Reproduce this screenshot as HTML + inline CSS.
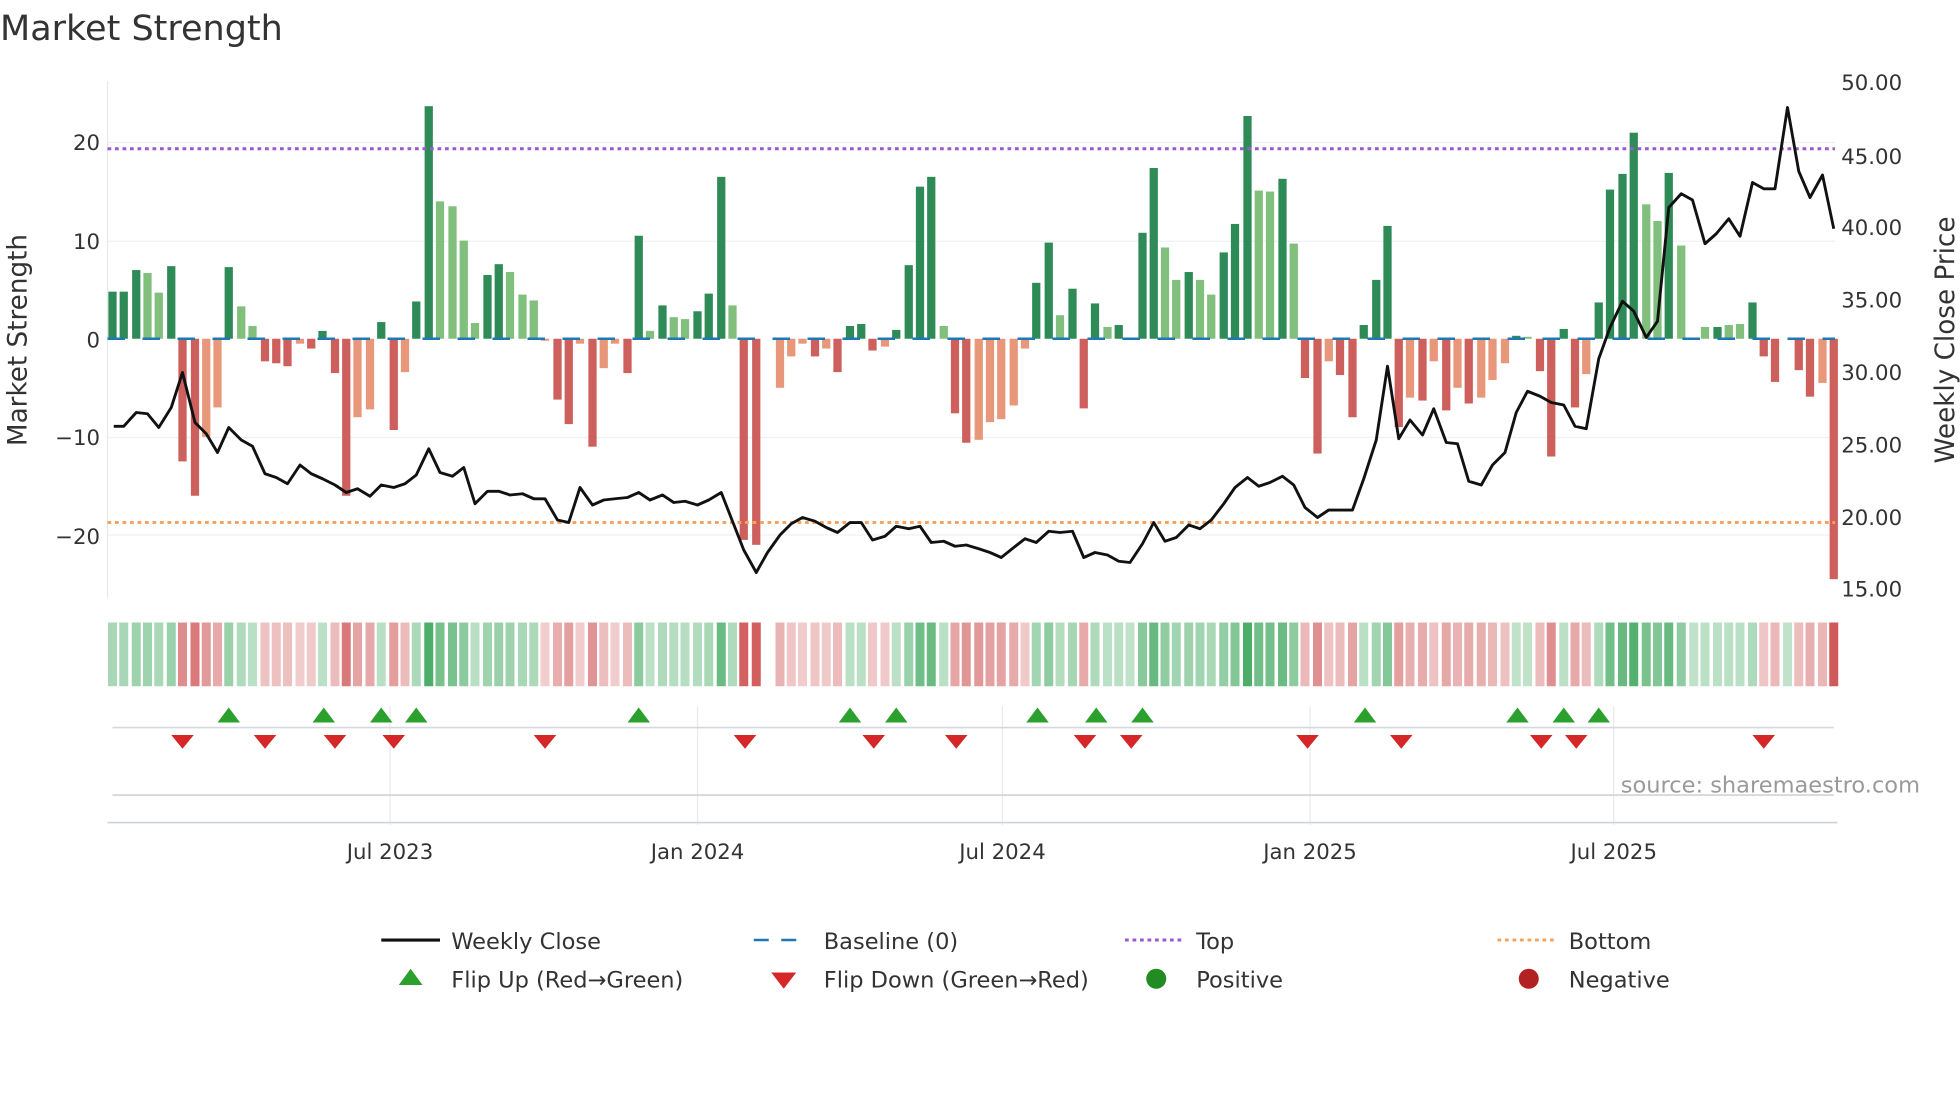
<!DOCTYPE html>
<html><head><meta charset="utf-8"><style>
html,body{margin:0;padding:0;background:#fff;width:1960px;height:1102px;overflow:hidden}
svg{display:block}
text{font-family:"DejaVu Sans","Liberation Sans",sans-serif;fill:#333}
</style></head><body>
<svg id="s" width="1960" height="1102" viewBox="0 0 1568 881.6" xmlns="http://www.w3.org/2000/svg">
<rect width="1568" height="882" fill="#fff"/>
<text x="0" y="32" font-size="28">Market Strength</text>
<g stroke="#eef0f5" stroke-width="1">
<line x1="86" x2="1468" y1="114" y2="114"/><line x1="86" x2="1468" y1="193" y2="193"/>
<line x1="86" x2="1468" y1="350" y2="350"/><line x1="86" x2="1468" y1="428" y2="428"/>
</g>
<line x1="86" x2="86" y1="65" y2="478" stroke="#e6e8ee"/>
<g font-size="17" text-anchor="end">
<text x="80" y="120">20</text><text x="80" y="199">10</text><text x="80" y="278">0</text>
<text x="80" y="356">−10</text><text x="80" y="435">−20</text>
</g>
<g font-size="17">
<text x="1473" y="72">50.00</text><text x="1473" y="131">45.00</text><text x="1473" y="188">40.00</text>
<text x="1473" y="246">35.00</text><text x="1473" y="304">30.00</text><text x="1473" y="362">25.00</text>
<text x="1473" y="420">20.00</text><text x="1473" y="477">15.00</text>
</g>
<text transform="translate(21,272) rotate(-90)" font-size="21" text-anchor="middle">Market Strength</text>
<text transform="translate(1563,272) rotate(-90)" font-size="21" text-anchor="middle">Weekly Close Price</text>
<g id="bars"></g>
<line x1="86" x2="1468" y1="271" y2="271" stroke="#1f77b4" stroke-width="2" stroke-dasharray="14 14"/>
<line x1="86" x2="1468" y1="119" y2="119" stroke="#9b59d0" stroke-width="2.4" stroke-dasharray="3 3"/>
<line x1="86" x2="1468" y1="418" y2="418" stroke="#f4a460" stroke-width="2.4" stroke-dasharray="3 3"/>
<polyline id="price" fill="none" stroke="#111" stroke-width="2.3" stroke-linejoin="round"/>
<g id="strip"></g>
<g stroke="#e8eaee" stroke-width="1">
<line x1="312" x2="312" y1="565" y2="660"/><line x1="558" x2="558" y1="565" y2="660"/>
<line x1="802" x2="802" y1="565" y2="660"/><line x1="1048" x2="1048" y1="565" y2="660"/>
<line x1="1291" x2="1291" y1="565" y2="660"/>
</g>
<line x1="90" x2="1467" y1="582" y2="582" stroke="#d5d8de" stroke-width="1.3"/>
<line x1="90" x2="1467" y1="636" y2="636" stroke="#d0d3d8" stroke-width="1.3"/>
<line x1="86" x2="1470" y1="658" y2="658" stroke="#cfd2d8" stroke-width="1.3"/>
<g id="mk"></g>
<text x="1536" y="634" font-size="18" style="fill:#9a9a9a" text-anchor="end">source: sharemaestro.com</text>
<g font-size="17" text-anchor="middle">
<text x="312" y="687">Jul 2023</text><text x="558" y="687">Jan 2024</text><text x="802" y="687">Jul 2024</text>
<text x="1048" y="687">Jan 2025</text><text x="1291" y="687">Jul 2025</text>
</g>
<g font-size="18">
<line x1="305" x2="352" y1="752" y2="752" stroke="#111" stroke-width="2.5"/><text x="361" y="759">Weekly Close</text>
<line x1="603" x2="647" y1="752" y2="752" stroke="#1f77b4" stroke-width="2" stroke-dasharray="12 10"/><text x="659" y="759">Baseline (0)</text>
<line x1="900" x2="946" y1="752" y2="752" stroke="#9b59d0" stroke-width="2.4" stroke-dasharray="3 3"/><text x="957" y="759">Top</text>
<line x1="1198" x2="1244" y1="752" y2="752" stroke="#f4a460" stroke-width="2.4" stroke-dasharray="3 3"/><text x="1255" y="759">Bottom</text>
<polygon points="319,788 338,788 328.5,775" fill="#2ca02c"/><text x="361" y="790">Flip Up (Red→Green)</text>
<polygon points="617,778 637,778 627,791" fill="#d62728"/><text x="659" y="790">Flip Down (Green→Red)</text>
<circle cx="925" cy="783" r="8" fill="#228b22"/><text x="957" y="790">Positive</text>
<circle cx="1223" cy="783" r="8" fill="#b22222"/><text x="1255" y="790">Negative</text>
</g>
</svg>
<script>
var B=[[90,4.8,'d'],[99,4.8,'d'],[109,7,'d'],[118,6.7,'l'],[127,4.7,'l'],[137,7.4,'d'],[146,-12.5,'r'],[156,-16,'r'],[165,-10,'s'],[174,-7,'s'],[183,7.3,'d'],[193,3.3,'l'],[202,1.3,'l'],[212,-2.3,'r'],[221,-2.5,'r'],[230,-2.8,'r'],[240,-0.5,'s'],[249,-1,'r'],[258,0.8,'d'],[268,-3.5,'r'],[277,-16,'r'],[286,-8,'s'],[296,-7.2,'s'],[305,1.7,'d'],[315,-9.3,'r'],[324,-3.4,'s'],[333,3.8,'d'],[343,23.7,'d'],[352,14,'l'],[362,13.5,'l'],[371,10,'l'],[380,1.6,'l'],[390,6.5,'d'],[399,7.6,'d'],[408,6.8,'l'],[418,4.5,'l'],[427,3.9,'l'],[436,-0.2,'s'],[446,-6.2,'r'],[455,-8.7,'r'],[464,-0.5,'s'],[474,-11,'r'],[483,-3,'s'],[492,-0.5,'s'],[502,-3.5,'r'],[511,10.5,'d'],[520,0.8,'l'],[530,3.4,'d'],[539,2.2,'l'],[548,2,'l'],[558,2.8,'d'],[567,4.6,'d'],[577,16.5,'d'],[586,3.4,'l'],[595,-20.5,'r'],[605,-21,'r'],[614,0,'s'],[624,-5,'s'],[633,-1.8,'s'],[642,-0.5,'s'],[652,-1.8,'r'],[661,-1,'s'],[670,-3.4,'r'],[680,1.3,'d'],[689,1.5,'d'],[698,-1.2,'r'],[708,-0.8,'s'],[717,0.9,'d'],[727,7.5,'d'],[736,15.5,'d'],[745,16.5,'d'],[755,1.3,'l'],[764,-7.6,'r'],[773,-10.6,'r'],[783,-10.3,'s'],[792,-8.5,'s'],[801,-8.2,'s'],[811,-6.8,'s'],[820,-1,'s'],[829,5.7,'d'],[839,9.8,'d'],[848,2.4,'l'],[858,5.1,'d'],[867,-7.1,'r'],[876,3.6,'d'],[886,1.2,'l'],[895,1.4,'d'],[904,0,'s'],[914,10.8,'d'],[923,17.4,'d'],[932,9.3,'l'],[941,6,'l'],[951,6.8,'d'],[960,6,'l'],[969,4.5,'l'],[979,8.8,'d'],[988,11.7,'d'],[998,22.7,'d'],[1007,15.1,'l'],[1016,15,'l'],[1026,16.3,'d'],[1035,9.7,'l'],[1044,-4,'r'],[1054,-11.7,'r'],[1063,-2.3,'s'],[1072,-3.7,'r'],[1082,-8,'r'],[1091,1.4,'d'],[1101,6,'d'],[1110,11.5,'d'],[1119,-9,'r'],[1128,-6,'s'],[1138,-6.3,'r'],[1147,-2.3,'s'],[1157,-7.3,'r'],[1166,-5,'s'],[1175,-6.6,'r'],[1185,-6,'s'],[1194,-4.2,'s'],[1204,-2.5,'s'],[1213,0.3,'d'],[1222,0.2,'l'],[1232,-3.3,'r'],[1241,-12,'r'],[1251,1,'d'],[1260,-7,'r'],[1269,-3.6,'s'],[1279,3.7,'d'],[1288,15.2,'d'],[1298,16.8,'d'],[1307,21,'d'],[1317,13.7,'l'],[1326,12,'l'],[1335,16.9,'d'],[1345,9.5,'l'],[1355,0,'s'],[1364,1.2,'l'],[1374,1.2,'d'],[1383,1.4,'l'],[1392,1.5,'l'],[1402,3.7,'d'],[1411,-1.8,'r'],[1420,-4.4,'r'],[1430,0,'s'],[1439,-3.2,'r'],[1448,-5.9,'r'],[1458,-4.5,'s'],[1467,-24.5,'r']];
var C={d:'#2e8b57',l:'#80bf7c',r:'#cd5f5c',s:'#e8977a'};
var NS='http://www.w3.org/2000/svg',g=document.getElementById('bars'),st=document.getElementById('strip');
function R(p,x,y,w,h,f){var r=document.createElementNS(NS,'rect');r.setAttribute('x',x);r.setAttribute('y',y);r.setAttribute('width',w);r.setAttribute('height',h);r.setAttribute('fill',f);p.appendChild(r);}
B.forEach(function(b){var h=Math.abs(b[1])*7.85;var y=b[1]>0?271-h:271;if(h>0.3)R(g,b[0]-3.3,y,6.6,h,C[b[2]]);
var v=b[1],a,f;if(v>=0){a=0.3+0.55*Math.min(v/22,1);f='rgba(46,160,80,'+a+')';}else{a=0.25+0.6*Math.min(-v/22,1);f='rgba(200,60,60,'+a+')';}
if(b[0]==614)f='#fff';R(st,b[0]-3.6,498,7.2,51,f);});
var P=[[91,341],[99,341],[109,330],[118,331],[127,342],[137,326],[146,298],[156,338],[165,347],[174,362],[183,342],[193,352],[202,357],[212,379],[221,382],[230,387],[240,372],[249,379],[258,383],[268,388],[277,394],[286,391],[296,397],[305,388],[315,390],[324,387],[333,380],[343,359],[352,378],[362,381],[371,374],[380,403],[390,393],[399,393],[408,396],[418,395],[427,399],[436,399],[446,416],[455,418],[464,390],[474,404],[483,400],[492,399],[502,398],[511,394],[520,400],[530,396],[539,402],[548,401],[558,404],[567,400],[577,394],[586,417],[595,440],[605,458],[614,442],[624,428],[633,419],[642,414],[652,417],[661,422],[670,426],[680,418],[689,418],[698,432],[708,429],[717,421],[727,423],[736,421],[745,434],[755,433],[764,437],[773,436],[783,439],[792,442],[801,446],[811,438],[820,431],[829,434],[839,425],[848,426],[858,425],[867,446],[876,442],[886,444],[895,449],[904,450],[914,435],[923,418],[932,433],[941,430],[951,420],[960,423],[969,416],[979,403],[988,390],[998,382],[1007,389],[1016,386],[1026,381],[1035,388],[1044,406],[1054,414],[1063,408],[1072,408],[1082,408],[1091,383],[1101,352],[1110,293],[1119,351],[1128,336],[1138,348],[1147,327],[1157,354],[1166,355],[1175,385],[1185,388],[1194,372],[1204,362],[1213,330],[1222,313],[1232,317],[1241,322],[1251,324],[1260,341],[1269,343],[1279,287],[1288,262],[1298,241],[1307,249],[1317,270],[1326,257],[1335,166],[1345,155],[1354,160],[1364,195],[1373,187],[1383,175],[1392,189],[1402,146],[1411,151],[1420,151],[1430,86],[1439,137],[1448,158],[1458,140],[1467,183]];
document.getElementById('price').setAttribute('points',P.map(function(p){return p.join(',')}).join(' '));
var mk=document.getElementById('mk'),U=[183,259,305,333,511,680,717,830,877,914,1092,1214,1251,1279],D=[146,212,268,315,436,596,699,765,868,905,1046,1121,1233,1261,1411];
function T(pts,f){var p=document.createElementNS(NS,'polygon');p.setAttribute('points',pts);p.setAttribute('fill',f);mk.appendChild(p);}
U.forEach(function(x){T((x-9)+',578 '+(x+9)+',578 '+x+',566','#2ca02c');});
D.forEach(function(x){T((x-9)+',588 '+(x+9)+',588 '+x+',599','#d62728');});
</script>
</body></html>
